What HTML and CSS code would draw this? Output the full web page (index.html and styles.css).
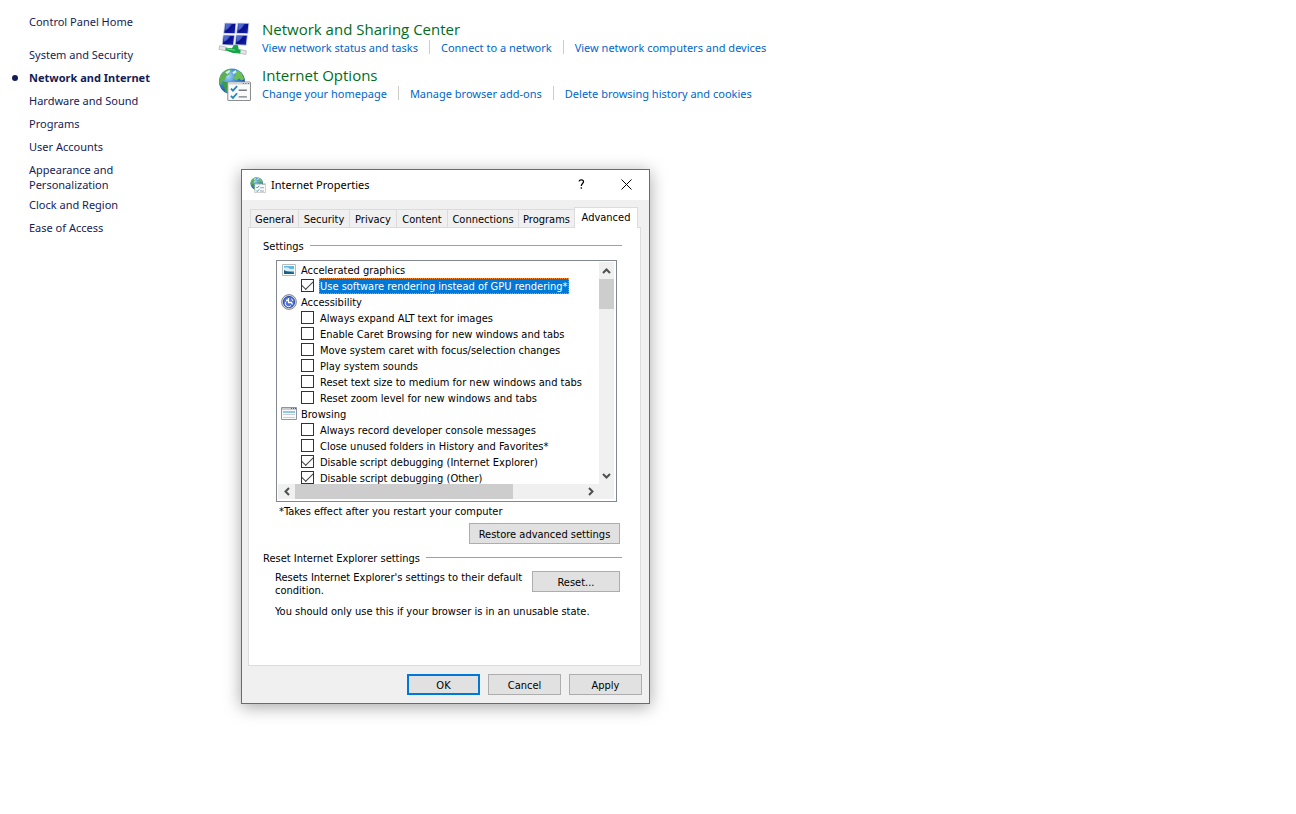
FILE: index.html
```html
<!DOCTYPE html>
<html lang="en">

<head>
    <meta charset="UTF-8">
    <meta name="viewport" content="width=device-width, initial-scale=1.0">
    <title>Network and Internet</title>
    <link rel="stylesheet" href="styles.css">
</head>

<body>
    <!-- Shared icons -->
    <svg class="sprite" aria-hidden="true">
        <defs>
            <radialGradient id="ocean" cx="0.35" cy="0.3" r="0.75">
                <stop offset="0" stop-color="#a9d8f8" />
                <stop offset="0.45" stop-color="#3d8ad8" />
                <stop offset="1" stop-color="#0f3f94" />
            </radialGradient>
            <linearGradient id="screen" x1="0" y1="0" x2="1" y2="1">
                <stop offset="0" stop-color="#4a68d0" />
                <stop offset="0.35" stop-color="#1a2fb0" />
                <stop offset="0.5" stop-color="#0a0f8c" />
                <stop offset="1" stop-color="#1526b4" />
            </linearGradient>
        </defs>
        <symbol id="icon-globe" viewBox="0 0 32 32">
            <circle cx="13.500" cy="13" r="12.600" fill="url(#ocean)" />
            <path d="M2 8C4 4 8 1 12 1l1 2-3 1 1 2-3 2-1 3-3 2-1 4-2-3z" fill="#5cb04f" />
            <path d="M5 13l5 1 4 3-2 4-1 4-4-2-1-5-2-3z" fill="#3f9c3d" />
            <path d="M16 4l3-2 4 3 2.500 6-3 1-2-2-3 2-3-3 3-2z" fill="#6cc04f" />
            <path d="M7 4l4-2 1 1-3 3zM14 4l3-2 1 2-3 2z" fill="#d7efff" />
            <rect x="9.500" y="13.500" width="22" height="18" rx="1" fill="#fafafa" stroke="#8c8f92" />
            <path d="M10 14h21v2H10z" fill="#d3d6d9" />
            <path d="M24 15h1M26.500 15h1M29 15h1" stroke="#666" />
            <path d="M12.500 20l2 2 4-4.500M12.500 27l2 2 4-4.500" fill="none" stroke="#2387bd" stroke-width="1.700" />
            <path d="M20 21.500h8M20 28h8" stroke="#777d82" stroke-width="1.400" />
        </symbol>
    </svg>

    <div class="page">
        <nav class="sidebar">
            <a class="home" href="#">Control Panel Home</a>
            <ul>
                <li><a href="#">System and Security</a></li>
                <li class="current"><a href="#">Network and Internet</a></li>
                <li><a href="#">Hardware and Sound</a></li>
                <li><a href="#">Programs</a></li>
                <li><a href="#">User Accounts</a></li>
                <li class="two-lines"><a href="#">Appearance and Personalization</a></li>
                <li><a href="#">Clock and Region</a></li>
                <li><a href="#">Ease of Access</a></li>
            </ul>
        </nav>

        <main class="content">
            <section class="category">
                <svg class="category-icon" viewBox="0 0 32 32">
                    <g fill="url(#screen)" stroke="#d5dcec" stroke-width="0.800">
                        <path d="M6.500 1l11 .3-1 10-11-.3z" />
                        <path d="M19 1l11 .3-1 10-11-.3z" />
                        <path d="M5 12.500l11 .3-1 9.700-11-.5z" />
                        <path d="M17.500 12.500l11 .3-1 9.700-11-.5z" />
                    </g>
                    <path d="M7.500 2l5.500.2-3 4-3 2zM20 2l5.500.2-3 4-3 2zM6 13.500l5.500.2-3 4-3 1.500zM18.500 13.500l5.500.2-3 4-3 1.500z" fill="#6f8ade" opacity="0.600" />
                    <path d="M1.500 23l7 1.500-.5 3.500-7-1.500z" fill="#e3e5e8" stroke="#a9adb1" stroke-width="0.700" />
                    <path d="M20.500 26.500l7 1.500-.5 3.500-7-1.500z" fill="#e3e5e8" stroke="#a9adb1" stroke-width="0.700" />
                    <path d="M7.500 25l6 .5 2-3.500 4 .5.500 4 2 1-.5 3-7-.5-7.500-2.500z" fill="#17a348" />
                    <path d="M8.500 26l8 1.500" stroke="#72da91" />
                </svg>
                <div>
                    <h2><a href="#">Network and Sharing Center</a></h2>
                    <ul class="tasks">
                        <li><a href="#">View network status and tasks</a></li>
                        <li><a href="#">Connect to a network</a></li>
                        <li><a href="#">View network computers and devices</a></li>
                    </ul>
                </div>
            </section>
            <section class="category">
                <svg class="category-icon"><use href="#icon-globe" /></svg>
                <div>
                    <h2><a href="#">Internet Options</a></h2>
                    <ul class="tasks">
                        <li><a href="#">Change your homepage</a></li>
                        <li><a href="#">Manage browser add-ons</a></li>
                        <li><a href="#">Delete browsing history and cookies</a></li>
                    </ul>
                </div>
            </section>
        </main>
    </div>

    <div class="dialog" role="dialog" aria-labelledby="dialogTitle">
        <header class="titlebar">
            <svg class="small-icon"><use href="#icon-globe" /></svg>
            <h1 id="dialogTitle">Internet Properties</h1>
            <button class="title-button" aria-label="Help">
                <svg width="7" height="10" viewBox="0 0 7 10"><path d="M1 2.300C1.500.5 5.500.3 5.500 2.700 5.500 4.500 3.300 4.500 3.300 7M3.300 8.300v1.500" fill="none" stroke="#000" stroke-width="1.300" /></svg>
            </button>
            <button class="title-button" aria-label="Close">
                <svg width="11" height="11" viewBox="0 0 11 11"><path d="M.5.5l10 10M10.500.5l-10 10" stroke="#000" /></svg>
            </button>
        </header>

        <div class="tabs" role="tablist">
            <button role="tab">General</button>
            <button role="tab">Security</button>
            <button role="tab">Privacy</button>
            <button role="tab">Content</button>
            <button role="tab">Connections</button>
            <button role="tab">Programs</button>
            <button role="tab" class="active" aria-selected="true">Advanced</button>
        </div>

        <div class="panel" role="tabpanel">
            <h3 class="group-title">Settings</h3>
            <div class="settings">
                <div class="settings-list">
                    <div class="group">
                        <svg class="small-icon" viewBox="0 0 16 16">
                            <path d="M1.500 2.500h13v11h-13z" fill="#fff" stroke="#b3bac1" />
                            <path d="M3 4h10v8H3z" fill="#65b7e8" />
                            <path d="M3 5.500h4l2 1.500h4v2H3z" fill="#d8effa" />
                            <path d="M3 8l3 1.500 7 1V12H3z" fill="#195f83" />
                        </svg>
                        <span>Accelerated graphics</span>
                    </div>
                    <label class="selected"><input type="checkbox" checked><span>Use software rendering instead of GPU rendering*</span></label>
                    <div class="group">
                        <svg class="small-icon" viewBox="0 0 16 16">
                            <circle cx="8" cy="8" r="7.400" fill="#d4d6da" stroke="#84878d" />
                            <circle cx="8" cy="8" r="5.600" fill="#4a70d8" stroke="#2f4fae" />
                            <path d="M7.500 4v4.500h3l1 2M5 6.500l2.500-.5" fill="none" stroke="#fff" stroke-width="1.300" />
                            <path d="M5 7.500a3.200 3.200 0 0 0 5 4M10.500 4.500l1.500 2.500" fill="none" stroke="#fff" />
                        </svg>
                        <span>Accessibility</span>
                    </div>
                    <label><input type="checkbox"><span>Always expand ALT text for images</span></label>
                    <label><input type="checkbox"><span>Enable Caret Browsing for new windows and tabs</span></label>
                    <label><input type="checkbox"><span>Move system caret with focus/selection changes</span></label>
                    <label><input type="checkbox"><span>Play system sounds</span></label>
                    <label><input type="checkbox"><span>Reset text size to medium for new windows and tabs</span></label>
                    <label><input type="checkbox"><span>Reset zoom level for new windows and tabs</span></label>
                    <div class="group">
                        <svg class="small-icon" viewBox="0 0 16 16">
                            <path d="M.5 1.500h15v12H.5z" fill="#fbfbfb" stroke="#8d959e" />
                            <path d="M1 2h14v2H1z" fill="#c5ccd5" />
                            <path d="M10 2.500h1M12 2.500h1M14 2.500h1" stroke="#555e69" />
                            <path d="M2 5h12v2H2z" fill="#8fc6ea" />
                            <path d="M2 8.500h12M2 11.500h12" stroke="#c9cdd2" />
                        </svg>
                        <span>Browsing</span>
                    </div>
                    <label><input type="checkbox"><span>Always record developer console messages</span></label>
                    <label><input type="checkbox"><span>Close unused folders in History and Favorites*</span></label>
                    <label><input type="checkbox" checked><span>Disable script debugging (Internet Explorer)</span></label>
                    <label><input type="checkbox" checked><span>Disable script debugging (Other)</span></label>
                </div>
                <div class="scroll-y">
                    <button aria-label="Scroll up"><svg width="9" height="6" viewBox="0 0 9 6"><path d="M1 5l3.500-3.500L8 5" /></svg></button>
                    <div class="thumb"></div>
                    <button aria-label="Scroll down"><svg width="9" height="6" viewBox="0 0 9 6"><path d="M1 1l3.500 3.500L8 1" /></svg></button>
                </div>
                <div class="scroll-x">
                    <button aria-label="Scroll left"><svg width="6" height="9" viewBox="0 0 6 9"><path d="M5 1L1.500 4.500 5 8" /></svg></button>
                    <div class="thumb"></div>
                    <button aria-label="Scroll right"><svg width="6" height="9" viewBox="0 0 6 9"><path d="M1 1l3.500 3.500L1 8" /></svg></button>
                </div>
            </div>
            <p class="note">*Takes effect after you restart your computer</p>
            <div class="restore">
                <button class="btn">Restore advanced settings</button>
            </div>

            <h3 class="group-title">Reset Internet Explorer settings</h3>
            <div class="reset">
                <p>Resets Internet Explorer's settings to their default condition.</p>
                <button class="btn">Reset...</button>
            </div>
            <p class="warning">You should only use this if your browser is in an unusable state.</p>
        </div>

        <footer class="actions">
            <button class="btn default">OK</button>
            <button class="btn">Cancel</button>
            <button class="btn">Apply</button>
        </footer>
    </div>
</body>

</html>
```

FILE: styles.css
```css
* {
    box-sizing: border-box;
}

body {
    margin: 0;
    background: #ffffff;
    font-family: "Noto Sans", sans-serif;
    font-size: 11px;
    line-height: 15px;
}

h1,
h2,
h3,
p,
ul {
    margin: 0;
    padding: 0;
    font-weight: normal;
}

ul {
    list-style: none;
}

a {
    text-decoration: none;
}

button {
    padding: 0;
    border: 0;
    font: inherit;
    color: inherit;
}

svg {
    display: block;
    flex-shrink: 0;
}

.sprite {
    position: absolute;
    width: 0;
    height: 0;
}

.page {
    display: flex;
    min-height: 100vh;
}

/* Left navigation */
.sidebar {
    flex: 0 0 218px;
    padding: 14px 20px 0 29px;
}

.sidebar a {
    color: #151c55;
}

.home {
    display: block;
    margin-bottom: 18px;
}

.sidebar li {
    margin-bottom: 8px;
}

.sidebar .two-lines {
    margin-bottom: 5px;
    padding-right: 60px;
}

.current {
    position: relative;
    font-weight: bold;
}

.current::before {
    content: "";
    position: absolute;
    left: -17px;
    top: 5px;
    width: 6px;
    height: 6px;
    border-radius: 50%;
    background: #151c55;
}

/* Categories */
.content {
    flex: 1;
    padding-top: 19px;
}

.category {
    display: flex;
    gap: 11px;
    height: 46px;
}

.category-icon {
    width: 33px;
    height: 33px;
    margin-top: 3px;
}

.category h2 {
    margin-bottom: 1px;
    font-family: "Open Sans", sans-serif;
    font-size: 15px;
    line-height: 20px;
}

.category h2 a {
    color: #006d1c;
}

.tasks {
    display: flex;
}

.tasks li {
    display: flex;
}

.tasks li + li::before {
    content: "";
    width: 1px;
    height: 14px;
    margin: 0 11px;
    background: #cccccc;
}

.tasks a {
    color: #0066cc;
}

/* Dialog window */
.dialog {
    position: absolute;
    left: 241px;
    top: 169px;
    width: 409px;
    border: 1px solid #6b6b6b;
    background: #f0f0f0;
    box-shadow: 0 3px 16px rgba(0, 0, 0, 0.35);
    font-family: Tahoma, "DejaVu Sans Condensed", sans-serif;
    line-height: 14px;
    color: #000000;
}

.titlebar {
    display: flex;
    align-items: center;
    height: 30px;
    padding-left: 8px;
    background: #ffffff;
}

.titlebar h1 {
    flex: 1;
    margin-left: 5px;
    font-family: "Noto Sans", sans-serif;
    font-size: 11px;
}

.title-button {
    display: flex;
    align-items: center;
    justify-content: center;
    width: 45px;
    height: 30px;
    padding-bottom: 2px;
    background: transparent;
}

.small-icon {
    width: 16px;
    height: 16px;
}

.tabs {
    display: grid;
    grid-template-columns: 48px 51px 47px 51px 71px 56px 64px;
    align-items: end;
    height: 27px;
    padding-left: 8px;
}

.tabs button {
    height: 18px;
    padding-top: 2px;
    border: 1px solid #dcdcdc;
    border-width: 1px 0 0 1px;
    background: #f0f0f0;
    white-space: nowrap;
}

.tabs .active {
    height: 21px;
    margin-bottom: -1px;
    padding: 0;
    border-right-width: 1px;
    background: #ffffff;
    z-index: 1;
}

.panel {
    margin: 0 8px 0 6px;
    padding: 12px 18px 47px 14px;
    border: 1px solid #dcdcdc;
    background: #ffffff;
}

.group-title {
    display: flex;
    gap: 6px;
    font-size: 11px;
}

.group-title::after {
    content: "";
    flex: 1;
    height: 1px;
    margin-top: 5px;
    background: #a0a0a0;
}

.settings {
    display: grid;
    grid-template-columns: 1fr 15px;
    grid-template-rows: 222px 15px;
    margin: 6px 5px 0 13px;
    padding: 1px 2px 2px 1px;
    border: 1px solid #828790;
}

.settings-list {
    overflow: hidden;
    white-space: nowrap;
}

.group,
.settings-list label {
    display: flex;
    height: 16px;
}

.group {
    gap: 3px;
    padding-left: 3px;
}

.settings-list label {
    gap: 5px;
    padding-left: 23px;
}

.settings-list span {
    padding: 2px 1px 0;
}

.settings-list .selected span {
    background: #0078d7;
    outline: 1px dotted #ff8728;
    outline-offset: -1px;
    color: #ffffff;
}

input[type="checkbox"] {
    appearance: none;
    display: grid;
    place-items: center;
    width: 13px;
    height: 13px;
    margin: 1px 0 0;
    border: 1px solid #333333;
    background: #ffffff;
}

input[type="checkbox"]:checked::before {
    content: "";
    width: 10px;
    height: 5px;
    margin-bottom: 3px;
    border: solid #444444;
    border-width: 0 0 1px 1px;
    transform: rotate(-45deg);
}

.scroll-y,
.scroll-x {
    display: flex;
    background: #f0f0f0;
}

.scroll-y {
    flex-direction: column;
}

.scroll-x {
    grid-column: 1 / 3;
    padding-right: 15px;
}

.scroll-y button,
.scroll-x button {
    display: flex;
    align-items: center;
    justify-content: center;
    flex: 0 0 17px;
    background: #f0f0f0;
}

.scroll-y button:last-child {
    margin-top: auto;
}

.scroll-x button:last-child {
    margin-left: auto;
}

.scroll-y path,
.scroll-x path {
    fill: none;
    stroke: #505050;
    stroke-width: 2;
}

.thumb {
    background: #cdcdcd;
}

.scroll-y .thumb {
    height: 30px;
}

.scroll-x .thumb {
    width: 218px;
}

.note {
    margin: 3px 0 4px 16px;
}

.btn {
    height: 21px;
    padding-top: 2px;
    border: 1px solid #adadad;
    background: #e1e1e1;
    line-height: 14px;
}

.restore {
    display: flex;
    justify-content: flex-end;
    margin: 0 2px 8px 0;
}

.restore .btn {
    width: 151px;
}

.reset {
    display: flex;
    align-items: flex-start;
    justify-content: space-between;
    margin: 5px 2px 8px 12px;
    line-height: 13px;
}

.reset p {
    flex: 1;
}

.reset .btn {
    width: 88px;
}

.warning {
    margin-left: 12px;
    line-height: 13px;
}

.actions {
    display: flex;
    justify-content: flex-end;
    gap: 8px;
    padding: 8px 7px;
}

.actions .btn {
    width: 73px;
}

.actions .default {
    border: 2px solid #0078d7;
}
```
